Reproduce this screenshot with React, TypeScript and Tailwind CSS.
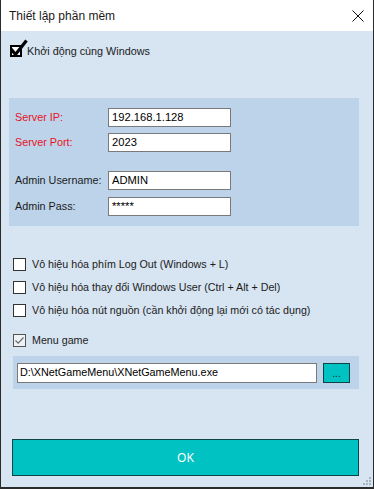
import React from "react";

const sans = { fontFamily: '"Liberation Sans", Arial, sans-serif' };

const Box = ({ checked }: { checked?: boolean }) => (
  <span
    className={
      "flex h-[13px] w-[13px] shrink-0 items-center justify-center border " +
      (checked ? "border-[#555] bg-[#eef2f6]" : "border-[#333] bg-white")
    }
  >
    {checked && (
      <svg width="11" height="11" viewBox="0 0 11 11">
        <path d="M1.5 5.5 L4.2 8.2 L9.5 2.5" fill="none" stroke="#6b6b6b" strokeWidth="1.2" />
      </svg>
    )}
  </span>
);

const Field = ({ label, value, red }: { label: string; value: string; red?: boolean }) => (
  <div className="flex h-[19px] items-center">
    <span
      className={
        "w-[99px] shrink-0 whitespace-nowrap pl-[6px] text-[10.8px] " +
        (red ? "text-[#e81123]" : "text-[#1b1b1b]")
      }
    >
      {label}
    </span>
    <div className="flex h-[19px] w-[123px] items-center border border-[#7a7a7a] bg-white px-[3px] text-[11.2px] text-black">
      {value}
    </div>
  </div>
);

const Option = ({ text, checked }: { text: string; checked?: boolean }) => (
  <div className="flex h-[23px] items-center gap-[6px] pl-[12px] text-[10.7px] text-[#1b1b1b]">
    <Box checked={checked} />
    <span>{text}</span>
  </div>
);

export default function App() {
  return (
    <div
      className="flex h-[489px] w-[374px] flex-col border-x border-b-2 border-[#2b2b2b] bg-[#d7e4f2]"
      style={sans}
    >
      <div className="flex h-[31px] shrink-0 items-center justify-between bg-white pl-[8px] pr-[9px]">
        <span className="text-[12px] text-[#1a1a1a]">Thiết lập phần mềm</span>
        <svg width="12" height="12" viewBox="0 0 12 12">
          <path d="M0.5 0.5 L11.5 11.5 M11.5 0.5 L0.5 11.5" stroke="#111" strokeWidth="1" />
        </svg>
      </div>

      <div className="mt-[12px] flex h-[16px] items-center gap-[5px] pl-[9px] text-[10.8px] text-[#1b1b1b]">
        <span className="relative h-[12px] w-[12px] border-2 border-black bg-white">
          <svg className="absolute left-[-2px] top-[-8px]" width="20" height="20" viewBox="0 0 20 20">
            <path d="M1 10 L5.5 15.5 L16.5 1.5" fill="none" stroke="#000" strokeWidth="3.2" strokeLinejoin="miter" />
          </svg>
        </span>
        <span>Khởi động cùng Windows</span>
      </div>

      <div className="ml-[8px] mt-[39px] flex h-[128px] w-[350px] flex-col bg-[#bcd3ea] pt-[10px]">
        <Field label="Server IP:" value="192.168.1.128" red />
        <div className="h-[6px]" />
        <Field label="Server Port:" value="2023" red />
        <div className="h-[19px]" />
        <Field label="Admin Username:" value="ADMIN" />
        <div className="h-[7px]" />
        <Field label="Admin Pass:" value="*****" />
      </div>

      <div className="mt-[27px] flex flex-col">
        <Option text="Vô hiệu hóa phím Log Out (Windows + L)" />
        <Option text="Vô hiệu hóa thay đổi Windows User (Ctrl + Alt + Del)" />
        <Option text="Vô hiệu hóa nút nguồn (cần khởi động lại mới có tác dụng)" />
        <div className="h-[7px]" />
        <Option text="Menu game" checked />
      </div>

      <div className="ml-[12px] mt-[4px] flex h-[33px] w-[346px] items-center gap-[6px] bg-[#bcd3ea] pl-[4px]">
        <div className="flex h-[20px] w-[300px] items-center border border-[#7a7a7a] bg-white px-[2px] text-[10.8px] text-black">
          D:\XNetGameMenu\XNetGameMenu.exe
        </div>
        <div className="flex h-[20px] w-[27px] items-end justify-center border border-[#0d4545] bg-[#00c2c2] pb-[3px] text-[10px] leading-none text-[#123]">
          ...
        </div>
      </div>

      <div
        className="ml-[11px] mt-[50px] flex h-[37px] w-[347px] items-center justify-center border border-[#0d4545] bg-[#00c2c2] text-[12px] text-white"
        style={{ fontFamily: '"Noto Sans", sans-serif' }}
      >
        OK
      </div>

      <div className="flex flex-1 items-end justify-end pb-[1px] pr-[1px]">
        <svg width="9" height="9" viewBox="0 0 9 9" fill="#a9b3bd">
          <rect x="6" y="0" width="2" height="2" />
          <rect x="3" y="3" width="2" height="2" />
          <rect x="6" y="3" width="2" height="2" />
          <rect x="0" y="6" width="2" height="2" />
          <rect x="3" y="6" width="2" height="2" />
          <rect x="6" y="6" width="2" height="2" />
        </svg>
      </div>
    </div>
  );
}
